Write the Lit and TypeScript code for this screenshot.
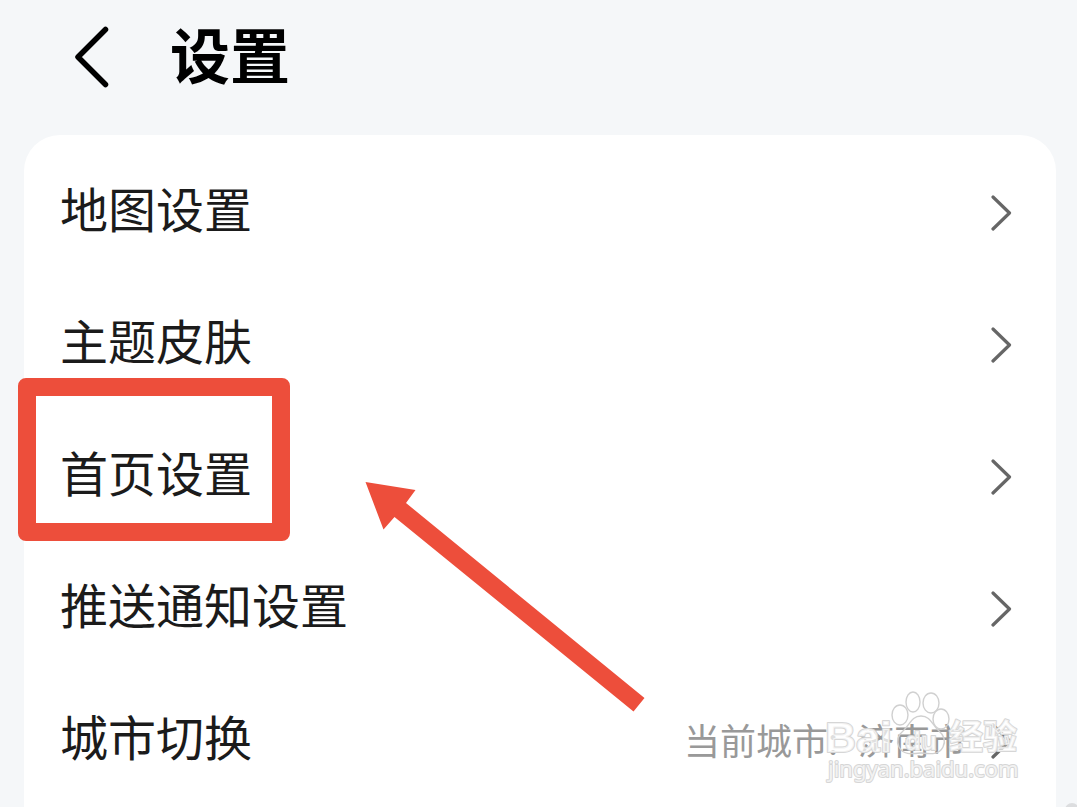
import { LitElement, html, css, nothing } from "lit";
import { customElement, property } from "lit/decorators.js";

interface SettingItem {
  label: string;
  hint?: string;
  value?: string;
  marked?: boolean;
}

const ITEMS: SettingItem[] = [
  { label: "地图设置" },
  { label: "主题皮肤" },
  { label: "首页设置", marked: true },
  { label: "推送通知设置" },
  { label: "城市切换", hint: "当前城市:", value: "济南市" },
];

@customElement("setting-row")
class SettingRow extends LitElement {
  @property({ attribute: false }) item!: SettingItem;

  static styles = css`
    :host {
      display: block;
      position: relative;
    }
    .row {
      display: flex;
      align-items: center;
      width: 100%;
      height: 132px;
      margin: 0;
      padding: 0 44px 0 36px;
      border: 0;
      background: none;
      font: inherit;
      color: #1b1b1b;
      text-align: left;
      cursor: pointer;
    }
    .label {
      flex: 1;
      padding-bottom: 12px;
      font-size: 48px;
      line-height: 72px;
      white-space: nowrap;
    }
    .detail {
      display: flex;
      gap: 20px;
      margin-right: 24px;
      padding-bottom: 4px;
      font-size: 36px;
      line-height: 56px;
      color: #999;
      white-space: nowrap;
    }
    .chevron {
      flex: none;
      display: block;
    }
    .frame {
      position: absolute;
      left: -6px;
      top: -33px;
      width: 272px;
      height: 163px;
      box-sizing: border-box;
      border: 18px solid #ed4e3b;
      border-radius: 8px;
      pointer-events: none;
    }
    .arrow {
      position: absolute;
      left: 336px;
      top: 67px;
      pointer-events: none;
      z-index: 1;
    }
  `;

  render() {
    const { label, hint, value, marked } = this.item;
    return html`
      <button class="row" type="button">
        <span class="label">${label}</span>
        ${value
          ? html`<span class="detail"><span>${hint}</span><span>${value}</span></span>`
          : nothing}
        <svg class="chevron" width="22" height="36" viewBox="0 0 22 36" aria-hidden="true">
          <path d="M3 2 L19.500 18 L3 34" fill="none" stroke="#666" stroke-width="3.200"
            stroke-linecap="round" stroke-linejoin="round" />
        </svg>
      </button>
      ${marked
        ? html`
            <div class="frame"></div>
            <svg class="arrow" width="290" height="240" viewBox="0 0 290 240" aria-hidden="true">
              <path fill="#ed4e3b"
                d="M5.500 4 L55.500 12 L46 25 L284.500 220 L273.500 233.500 L34.500 39 L23.500 51.500 Z" />
            </svg>
          `
        : nothing}
    `;
  }
}

@customElement("site-watermark")
class SiteWatermark extends LitElement {
  static styles = css`
    :host {
      display: block;
      pointer-events: none;
    }
    svg {
      display: block;
    }
    .mark {
      fill: #fff;
      fill-opacity: 0.7;
      stroke: #d6d6d6;
      stroke-width: 2px;
      paint-order: stroke;
      stroke-linejoin: round;
    }
    .brand {
      font: 700 43px "Liberation Sans", sans-serif;
    }
    .han {
      font: 700 34px "Noto Sans CJK SC", sans-serif;
    }
    .url {
      font: 400 22px "Noto Sans", sans-serif;
    }
    .paw {
      fill: none;
      stroke: #d0d0d0;
      stroke-width: 1.400px;
    }
    .du {
      font: 700 26px "Liberation Sans", sans-serif;
    }
  `;

  render() {
    return html`
      <svg width="200" height="100" viewBox="0 0 200 100" aria-hidden="true">
        <path class="paw" d="M98 25 C89 25 87 33 81 39 C75 44 73 50 76 56 C80 64 88 63 98 62
          C108 63 116 64 120 56 C123 50 121 44 115 39 C109 33 107 25 98 25 Z" />
        <ellipse class="paw" cx="77" cy="24" rx="8" ry="10" />
        <ellipse class="paw" cx="90" cy="11" rx="7" ry="10" />
        <ellipse class="paw" cx="108" cy="12" rx="8" ry="10" />
        <ellipse class="paw" cx="118" cy="28" rx="8" ry="10" />
        <text class="mark brand" x="2" y="61">Bai</text>
        <text class="mark du" x="82" y="59">du</text>
        <text class="mark han" x="126" y="58">经验</text>
        <text class="mark url" x="5" y="86">jingyan.baidu.com</text>
      </svg>
    `;
  }
}

@customElement("app-root")
class AppRoot extends LitElement {
  static styles = css`
    :host {
      display: block;
      position: relative;
      min-height: 100vh;
      overflow: hidden;
      background: #f5f7f9;
      font-family: "Noto Sans CJK SC", sans-serif;
    }
    .header {
      display: flex;
      align-items: center;
      gap: 60px;
      height: 135px;
      box-sizing: border-box;
      padding: 0 72px 21px;
    }
    .back {
      display: block;
      padding: 0;
      border: 0;
      background: none;
      cursor: pointer;
    }
    .back svg {
      display: block;
    }
    .title {
      margin: 0;
      padding-bottom: 8px;
      font-size: 60px;
      line-height: 88px;
      font-weight: 700;
      color: #000;
    }
    .card {
      margin: 0 21px 0 24px;
      padding-top: 12px;
      border-radius: 36px 36px 0 0;
      background: #fff;
    }
    .watermark {
      position: absolute;
      right: 54px;
      bottom: 16px;
      z-index: 2;
    }
    .dot {
      position: absolute;
      right: -2px;
      bottom: -10px;
      width: 14px;
      height: 14px;
      border-radius: 50%;
      background: #dcdddf;
    }
  `;

  render() {
    return html`
      <header class="header">
        <button class="back" type="button" aria-label="返回">
          <svg width="38" height="62" viewBox="0 0 38 62" aria-hidden="true">
            <path d="M33.500 3.500 L6 31 L33.500 58.500" fill="none" stroke="#000" stroke-width="5.500"
              stroke-linecap="round" stroke-linejoin="round" />
          </svg>
        </button>
        <h1 class="title">设置</h1>
      </header>
      <main class="card">
        ${ITEMS.map((item) => html`<setting-row .item=${item}></setting-row>`)}
      </main>
      <site-watermark class="watermark"></site-watermark>
      <div class="dot"></div>
    `;
  }
}
